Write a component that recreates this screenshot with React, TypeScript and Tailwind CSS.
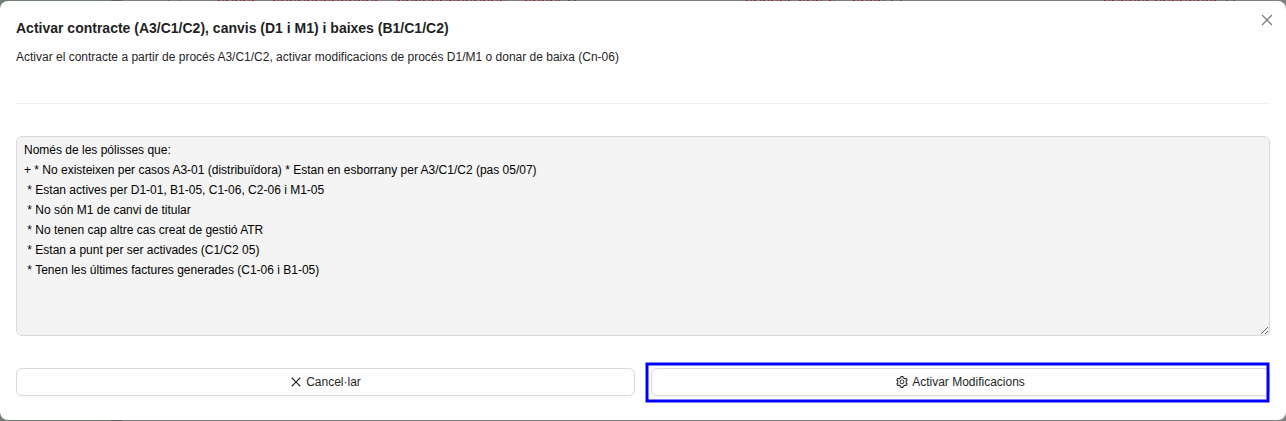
import React from "react";
import { AiOutlineClose, AiOutlineSetting } from "react-icons/ai";

const MESSAGE = `Només de les pólisses que:
+ * No existeixen per casos A3-01 (distribuïdora) * Estan en esborrany per A3/C1/C2 (pas 05/07)
 * Estan actives per D1-01, B1-05, C1-06, C2-06 i M1-05
 * No són M1 de canvi de titular
 * No tenen cap altre cas creat de gestió ATR
 * Estan a punt per ser activades (C1/C2 05)
 * Tenen les últimes factures generades (C1-06 i B1-05)`;

// Trims the margin of the 1024-unit icon grid so the glyph fills its box.
const ICON_VIEW = "64 64 896 896";

function PageStrip({ marks }: { marks?: boolean }) {
  return (
    <svg className="block h-px w-full shrink-0" viewBox="0 0 1286 1" preserveAspectRatio="none" shapeRendering="crispEdges" aria-hidden="true">
      <rect width="1286" height="1" fill="#808080" />
      <rect width="111" height="1" fill="#6f7f71" />
      <rect x="111" width="11" height="1" fill="#625f60" />
      {marks && (
        <g strokeWidth="1">
          <path d="M168 .5h1M180 .5h1M568 .5h2M574 .5h2M891 .5h2M900 .5h2M1226 .5h2M1233 .5h2" stroke="#555" />
          <path d="M218 .5H254M273 .5H380M398 .5H508M525 .5H560M746 .5H794M799 .5H822M829 .5H837M853 .5H886M1104 .5H1148M1155 .5H1219" stroke="#a3252b" strokeDasharray="2 3 1 2 2 4 1 2" />
        </g>
      )}
    </svg>
  );
}

const buttonClass =
  "flex h-7 w-full items-center justify-center gap-1 rounded-md border border-[#d9d9d9] bg-white text-xs text-[#1f1f1f] shadow-[0_2px_0_rgba(0,0,0,0.02)]";

export default function App() {
  return (
    <div
      className="flex h-[421px] w-full flex-col overflow-hidden bg-[linear-gradient(90deg,#6f7f71_111px,#808080_111px)] text-[#1f1f1f]"
      style={{ fontFamily: '"Liberation Sans", Arial, sans-serif' }}
    >
      <PageStrip marks />
      <section role="dialog" className="relative flex h-[419px] flex-col rounded-lg bg-white px-4 pt-4">
        <h1 className="text-sm leading-[22px] font-bold">
          Activar contracte (A3/C1/C2), canvis (D1 i M1) i baixes (B1/C1/C2)
        </h1>
        <p className="mt-2 text-xs leading-5">
          Activar el contracte a partir de procés A3/C1/C2, activar modificacions de procés D1/M1 o donar de baixa (Cn-06)
        </p>
        <hr className="mt-9 border-t border-[#f0f0f0]" />
        <textarea
          readOnly
          value={MESSAGE}
          className="mt-8 block h-[200px] w-full resize overflow-hidden rounded-md border border-[#d9d9d9] bg-[#f4f4f4] px-[7px] py-[3px] text-xs leading-5 text-black outline-none"
        />
        <div className="mt-8 grid grid-cols-2 gap-4">
          <button className={buttonClass}>
            <AiOutlineClose viewBox={ICON_VIEW} className="size-3" />
            Cancel·lar
          </button>
          <div className="relative">
            <button className={buttonClass}>
              <AiOutlineSetting viewBox={ICON_VIEW} className="size-3" />
              Activar Modificacions
            </button>
            <svg className="pointer-events-none absolute -top-2 -left-2 h-11 w-[calc(100%+10px)]" viewBox="0 0 629 44" preserveAspectRatio="none" aria-hidden="true">
              <rect x="4" y="4" width="621" height="37" fill="none" stroke="#0000ff" strokeWidth="3" />
            </svg>
          </div>
        </div>
        <button aria-label="Tancar" className="absolute top-3 right-3 flex size-[14px] items-center justify-center text-[#808080]">
          <AiOutlineClose viewBox={ICON_VIEW} className="size-[14px]" />
        </button>
      </section>
      <PageStrip />
    </div>
  );
}
